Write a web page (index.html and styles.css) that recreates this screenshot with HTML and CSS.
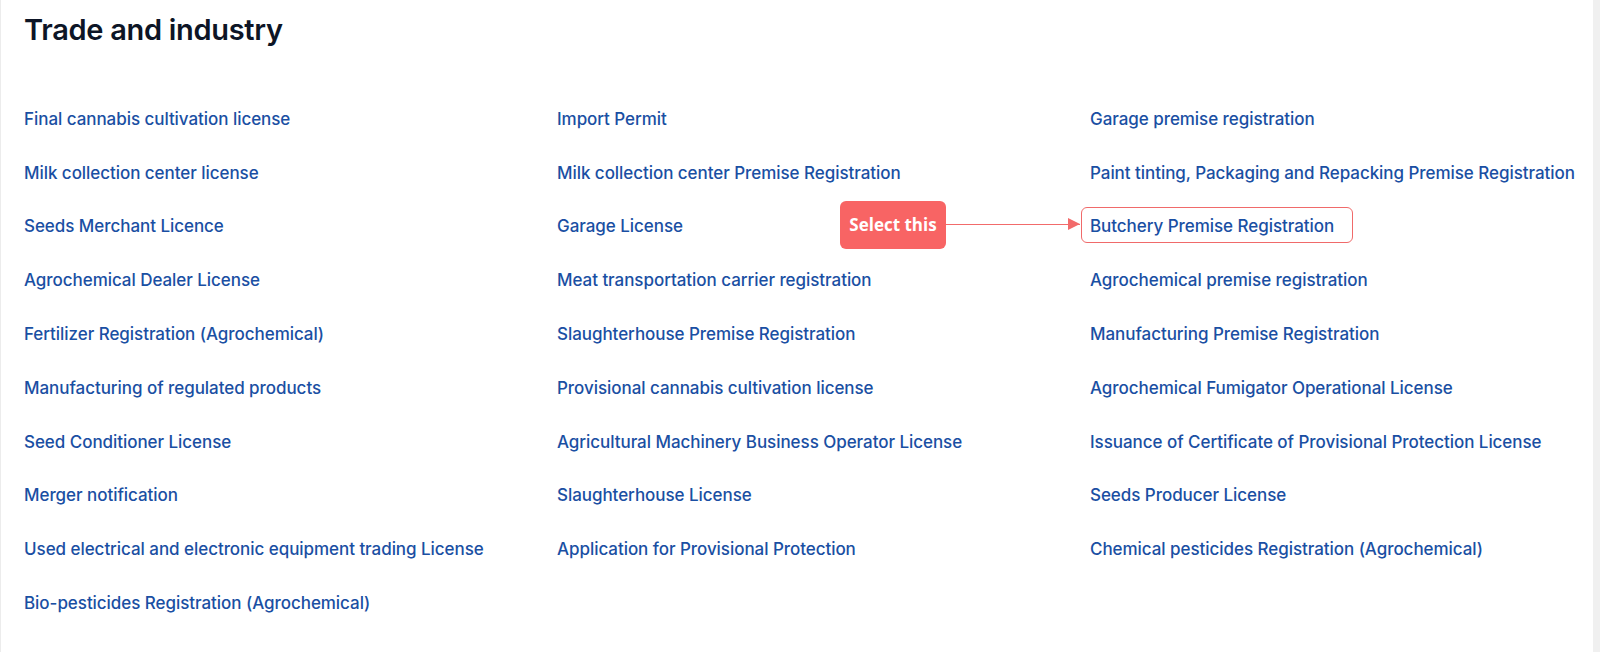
FILE: index.html
```html
<!DOCTYPE html>
<html lang="en">
<head>
<meta charset="utf-8">
<title>Trade and industry</title>
<link rel="stylesheet" href="styles.css">
</head>
<body>
<main class="page">
  <h1 class="title">Trade and industry</h1>
  <ul class="services">
    <li><a href="#">Final cannabis cultivation license</a></li>
    <li><a href="#">Import Permit</a></li>
    <li><a href="#">Garage premise registration</a></li>
    <li><a href="#">Milk collection center license</a></li>
    <li><a href="#">Milk collection center Premise Registration</a></li>
    <li><a href="#">Paint tinting, Packaging and Repacking Premise Registration</a></li>
    <li><a href="#">Seeds Merchant Licence</a></li>
    <li><a href="#">Garage License</a></li>
    <li class="highlight">
      <a href="#">Butchery Premise Registration</a>
      <span class="callout">Select this</span>
      <span class="arrow"></span>
    </li>
    <li><a href="#">Agrochemical Dealer License</a></li>
    <li><a href="#">Meat transportation carrier registration</a></li>
    <li><a href="#">Agrochemical premise registration</a></li>
    <li><a href="#">Fertilizer Registration (Agrochemical)</a></li>
    <li><a href="#">Slaughterhouse Premise Registration</a></li>
    <li><a href="#">Manufacturing Premise Registration</a></li>
    <li><a href="#">Manufacturing of regulated products</a></li>
    <li><a href="#">Provisional cannabis cultivation license</a></li>
    <li><a href="#">Agrochemical Fumigator Operational License</a></li>
    <li><a href="#">Seed Conditioner License</a></li>
    <li><a href="#">Agricultural Machinery Business Operator License</a></li>
    <li><a href="#">Issuance of Certificate of Provisional Protection License</a></li>
    <li><a href="#">Merger notification</a></li>
    <li><a href="#">Slaughterhouse License</a></li>
    <li><a href="#">Seeds Producer License</a></li>
    <li><a href="#">Used electrical and electronic equipment trading License</a></li>
    <li><a href="#">Application for Provisional Protection</a></li>
    <li><a href="#">Chemical pesticides Registration (Agrochemical)</a></li>
    <li><a href="#">Bio-pesticides Registration (Agrochemical)</a></li>
  </ul>
</main>
</body>
</html>
```
FILE: styles.css
```css
html, body {
  margin: 0;
  padding: 0;
}
body {
  background: #f0f0f0;
  font-family: "Inter", "Noto Sans", sans-serif;
}
.page {
  width: 1593px;
  height: 652px;
  box-sizing: border-box;
  background: #ffffff;
  border-left: 1px solid #ececec;
  padding: 10px 0 0 23px;
  overflow: hidden;
}
.title {
  margin: 0;
  font-size: 29px;
  line-height: 40px;
  font-weight: 600;
  color: #0d1526;
  letter-spacing: -0.3px;
}
.services {
  list-style: none;
  margin: 0;
  padding: 0;
  margin-top: 42px;
  display: grid;
  grid-template-columns: 533px 533px 527px;
  grid-auto-rows: 53.8px;
}
.services li {
  position: relative;
  display: flex;
  align-items: center;
}
.services a {
  font-size: 17px;
  line-height: 24px;
  font-weight: 500;
  color: #1a4fa3;
  text-decoration: none;
  letter-spacing: -0.05px;
}
.highlight::before {
  content: "";
  position: absolute;
  left: -9px;
  top: 7px;
  width: 272px;
  height: 36px;
  box-sizing: border-box;
  border: 1.5px solid #f06a6a;
  border-radius: 6px;
}
.callout {
  position: absolute;
  left: -250px;
  top: 1px;
  width: 106px;
  height: 48px;
  display: flex;
  align-items: center;
  justify-content: center;
  background: #f86464;
  border-radius: 6px;
  color: #ffffff;
  font-family: "Open Sans", sans-serif;
  font-weight: 700;
  font-size: 17px;
}
.arrow {
  position: absolute;
  left: -144px;
  top: 24px;
  width: 134px;
  height: 1.5px;
  background: #f26b6b;
}
.arrow::after {
  content: "";
  position: absolute;
  right: 0;
  top: -6px;
  border-left: 12px solid #f26b6b;
  border-top: 6.75px solid transparent;
  border-bottom: 6.75px solid transparent;
}
```
